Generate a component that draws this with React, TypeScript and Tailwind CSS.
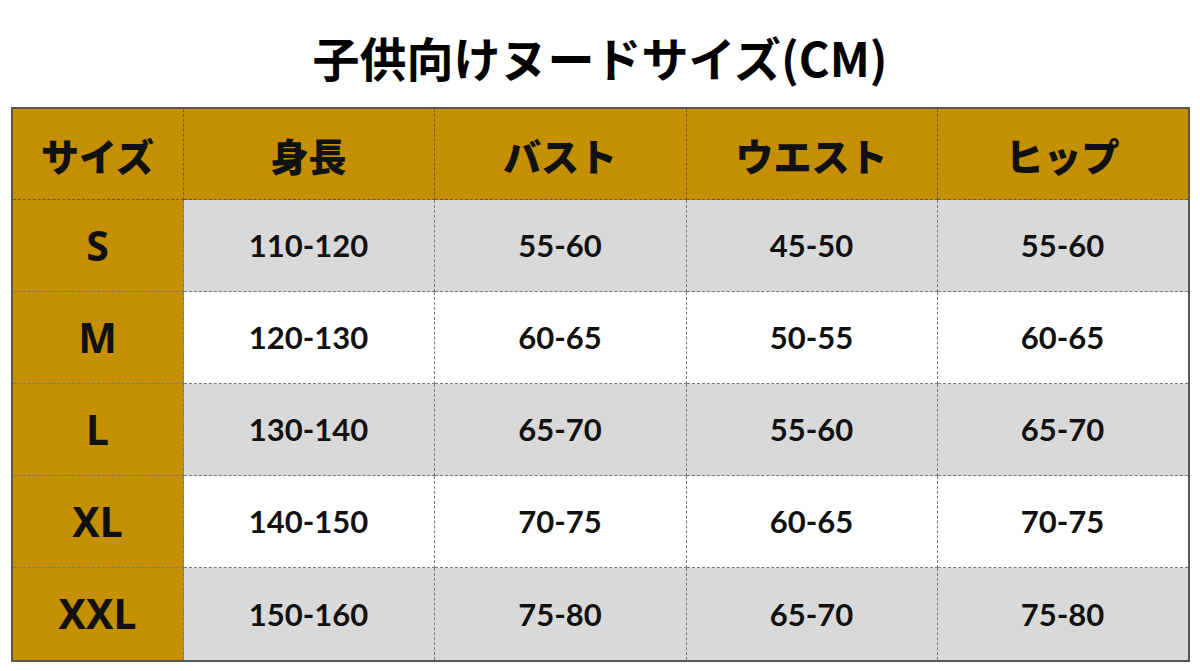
import React from 'react';

const headers = ['サイズ', '身長', 'バスト', 'ウエスト', 'ヒップ'];

const rows = [
  ['S', '110-120', '55-60', '45-50', '55-60'],
  ['M', '120-130', '60-65', '50-55', '60-65'],
  ['L', '130-140', '65-70', '55-60', '65-70'],
  ['XL', '140-150', '70-75', '60-65', '70-75'],
  ['XXL', '150-160', '75-80', '65-70', '75-80'],
];

export default function App() {
  return (
    <div className="w-[1200px] h-[671px] bg-white flex flex-col items-center">
      <h1 className="h-[107px] flex items-center justify-center text-[47px] font-bold text-black pt-[8px] font-['Noto_Sans_CJK_JP','Noto_Sans',sans-serif]">
        子供向けヌードサイズ(CM)
      </h1>

      <div className="border-2 border-[#5a5550] grid grid-cols-[171px_251px_252px_251px_250px]">
        {headers.map((h, i) => (
          <div
            key={h}
            className={`h-[91px] bg-[#c48f00] flex items-center justify-center text-[38px] font-black text-[#111] border-b border-dashed border-[#6a5a3a] font-['Noto_Sans_CJK_JP','Noto_Sans',sans-serif] ${
              i < headers.length - 1 ? 'border-r' : ''
            }`}
          >
            {h}
          </div>
        ))}

        {rows.map((row, r) =>
          row.map((cell, c) => {
            const last = c === row.length - 1;
            const bottom = r < rows.length - 1;
            const bg = c === 0 ? 'bg-[#c48f00]' : r % 2 === 0 ? 'bg-[#d9d9d9]' : 'bg-white';
            const type =
              c === 0
                ? "text-[41px] font-bold font-['Noto_Sans','Noto_Sans_CJK_JP',sans-serif]"
                : "text-[31px] font-bold font-['Lato','Noto_Sans',sans-serif]";
            return (
              <div
                key={`${r}-${c}`}
                className={`h-[92px] ${bg} ${type} flex items-center justify-center text-[#111] border-dashed border-[#777] ${
                  last ? '' : 'border-r'
                } ${bottom ? 'border-b' : ''}`}
              >
                {cell}
              </div>
            );
          })
        )}
      </div>
    </div>
  );
}
